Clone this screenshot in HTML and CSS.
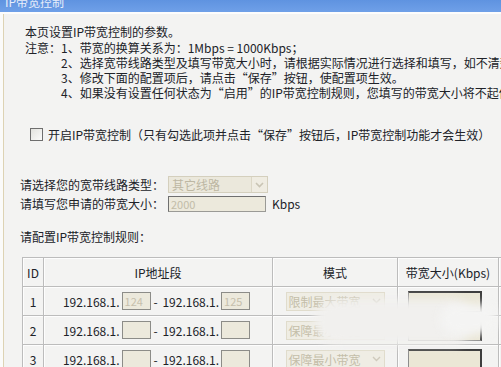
FILE: index.html
```html
<!DOCTYPE html>
<html>
<head>
<meta charset="utf-8">
<link rel="stylesheet" href="styles.css">
</head>
<body>
<div class="titlebar"><span>IP带宽控制</span></div>
<div class="page">
  <div class="intro">
    <div class="line first">本页设置IP带宽控制的参数。</div>
    <div class="note">
      <span class="lead">注意：</span>
      <div class="items">
        <div class="line">1、带宽的换算关系为：1Mbps = 1000Kbps；</div>
        <div class="line">2、选择宽带线路类型及填写带宽大小时，请根据实际情况进行选择和填写，如不清楚，请咨询您的宽带提供商。</div>
        <div class="line">3、修改下面的配置项后，请点击“保存”按钮，使配置项生效。</div>
        <div class="line">4、如果没有设置任何状态为“启用”的IP带宽控制规则，您填写的带宽大小将不起作用。</div>
      </div>
    </div>
  </div>

  <div class="enable">
    <span class="checkbox"></span>
    <span>开启IP带宽控制（只有勾选此项并点击“保存”按钮后，IP带宽控制功能才会生效）</span>
  </div>

  <div class="form">
    <div class="frow">
      <span class="flabel">请选择您的宽带线路类型：</span>
      <div class="select wide"><span class="sval">其它线路</span><span class="sbtn"><svg width="9" height="6" viewBox="0 0 9 6"><path d="M1 1 L4.5 4.5 L8 1" fill="none" stroke="#c9c4b4" stroke-width="1.6"/></svg></span></div>
    </div>
    <div class="frow">
      <span class="flabel">请填写您申请的带宽大小：</span>
      <div class="input total">2000</div>
      <span class="unit">Kbps</span>
    </div>
  </div>

  <div class="rules-title">请配置IP带宽控制规则：</div>

  <table class="rules">
    <colgroup>
      <col class="c-id"><col class="c-ip"><col class="c-mode"><col class="c-bw"><col class="c-more">
    </colgroup>
    <tr class="head">
      <td>ID</td>
      <td>IP地址段</td>
      <td>模式</td>
      <td>带宽大小(Kbps)</td>
      <td></td>
    </tr>
    <tr>
      <td>1</td>
      <td><div class="ipwrap">192.168.1.<span class="ipbox">124</span> - 192.168.1.<span class="ipbox">125</span></div></td>
      <td><div class="mode"><span>限制最大带宽</span><svg width="9" height="6" viewBox="0 0 9 6"><path d="M1 1 L4.5 4.5 L8 1" fill="none" stroke="#cfcabc" stroke-width="1.4"/></svg></div></td>
      <td class="bw"><div class="bwbox"></div></td>
      <td></td>
    </tr>
    <tr>
      <td>2</td>
      <td><div class="ipwrap">192.168.1.<span class="ipbox"></span> - 192.168.1.<span class="ipbox"></span></div></td>
      <td><div class="mode"><span>保障最小带宽</span><svg width="9" height="6" viewBox="0 0 9 6"><path d="M1 1 L4.5 4.5 L8 1" fill="none" stroke="#cfcabc" stroke-width="1.4"/></svg></div></td>
      <td class="bw"><div class="bwbox"></div></td>
      <td></td>
    </tr>
    <tr>
      <td>3</td>
      <td><div class="ipwrap">192.168.1.<span class="ipbox"></span> - 192.168.1.<span class="ipbox"></span></div></td>
      <td><div class="mode"><span>保障最小带宽</span><svg width="9" height="6" viewBox="0 0 9 6"><path d="M1 1 L4.5 4.5 L8 1" fill="none" stroke="#cfcabc" stroke-width="1.4"/></svg></div></td>
      <td class="bw"><div class="bwbox"></div></td>
      <td></td>
    </tr>
  </table>
</div>
<div class="blur b1"></div>
<div class="blur b2"></div>
</body>
</html>
```
FILE: styles.css
```css
html, body {
  margin: 0;
  padding: 0;
  width: 501px;
  height: 367px;
  overflow: hidden;
  background: #fbfbfa;
  font-family: "Noto Sans CJK SC", "Noto Sans", sans-serif;
  font-size: 12px;
  color: #202228;
}

.titlebar {
  height: 12px;
  overflow: hidden;
  background: linear-gradient(#5f93e0, #6fa0e8);
  padding-left: 5px;
  border-bottom: 2px solid #fdfdfd;
}
.titlebar span {
  display: block;
  margin-top: -6px;
  line-height: 15px;
  color: #e8eefa;
  font-size: 12px;
}

.page {
  margin-left: 3px;
  border-left: 1px solid #ddd3b4;
  background: #f3f3f2;
  height: 400px;
  width: 600px;
  white-space: nowrap;
}

.line {
  line-height: 15px;
  height: 15px;
}

.intro {
  padding: 10px 0 0 21px;
}
.intro .first {
  margin-bottom: 1px;
}
.note {
  display: flex;
}
.lead {
  flex: none;
  width: 36px;
  line-height: 15px;
}

.enable {
  display: flex;
  align-items: center;
  gap: 5px;
  margin: 27px 0 0 26px;
  height: 15px;
  line-height: 15px;
}
.checkbox {
  width: 11px;
  height: 11px;
  border: 1px solid #6e6e6e;
  background: linear-gradient(135deg, #e2e2de, #fbfbfa);
}

.form {
  margin: 33px 0 0 16px;
}
.frow {
  display: flex;
  align-items: center;
  height: 19px;
}
.flabel {
  width: 148px;
  flex: none;
}
.select {
  display: flex;
  align-items: center;
  height: 15px;
  border: 1px solid #d4cfbd;
  background: #ebe8dc;
  color: #bdb7a3;
}
.select.wide {
  width: 98px;
}
.sval {
  flex: 1;
  padding-left: 3px;
  line-height: 15px;
}
.sbtn {
  width: 15px;
  height: 15px;
  border-left: 1px solid #dcd7c6;
  background: #efece2;
  display: flex;
  align-items: center;
  justify-content: center;
}
.input {
  height: 14px;
  line-height: 14px;
  background: #ece9dc;
  border: 1px solid #9a9a96;
  border-top-color: #6f6f6f;
  border-left-color: #6f6f6f;
  color: #c2bca8;
  padding-left: 2px;
  font-size: 11px;
}
.input.total {
  width: 94px;
}
.unit {
  margin-left: 6px;
}

.rules-title {
  margin: 16px 0 0 16px;
  line-height: 16px;
}

.rules {
  margin: 12px 0 0 18px;
  border-collapse: collapse;
  table-layout: fixed;
  width: 516px;
}
.rules td {
  border: 1px solid #bcbcbc;
  box-shadow: inset 1px 1px 0 #fdfdfd;
  height: 28px;
  padding: 0;
  text-align: center;
  vertical-align: middle;
}
col.c-id { width: 21px; }
col.c-ip { width: 229px; }
col.c-mode { width: 125px; }
col.c-bw { width: 101px; }
col.c-more { width: 40px; }

.ipwrap {
  display: inline-flex;
  align-items: center;
  word-spacing: 2px;
}
.ipbox {
  display: inline-block;
  width: 25px;
  height: 16px;
  line-height: 16px;
  margin: 0 3px 0 2px;
  background: #ece9dc;
  border: 1px solid #8c8c88;
  color: #c6c0ad;
  font-size: 11px;
  text-align: left;
  padding-left: 2px;
  box-sizing: content-box;
}
.mode {
  display: inline-flex;
  align-items: center;
  justify-content: space-between;
  width: 92px;
  height: 17px;
  padding: 0 3px 0 2px;
  border: 1px solid #e0dccc;
  background: #efede4;
  color: #c4bea9;
}
.rules td.bw {
  text-align: left;
}
.bwbox {
  margin-left: 10px;
  width: 71px;
  height: 18px;
  background: #ebe7d6;
  border: 1px solid #8d8d8d;
  border-top: 2px solid #3e3e3e;
  border-right: 2px solid #3e3e3e;
}

.blur {
  position: absolute;
  background: #f1f0ee;
  filter: blur(5px);
}
.b1 {
  left: 314px;
  top: 299px;
  width: 160px;
  height: 46px;
  border-radius: 26px;
}
.b2 {
  left: 440px;
  top: 304px;
  width: 58px;
  height: 30px;
  border-radius: 18px;
  background: #f4f4f3;
}
```
